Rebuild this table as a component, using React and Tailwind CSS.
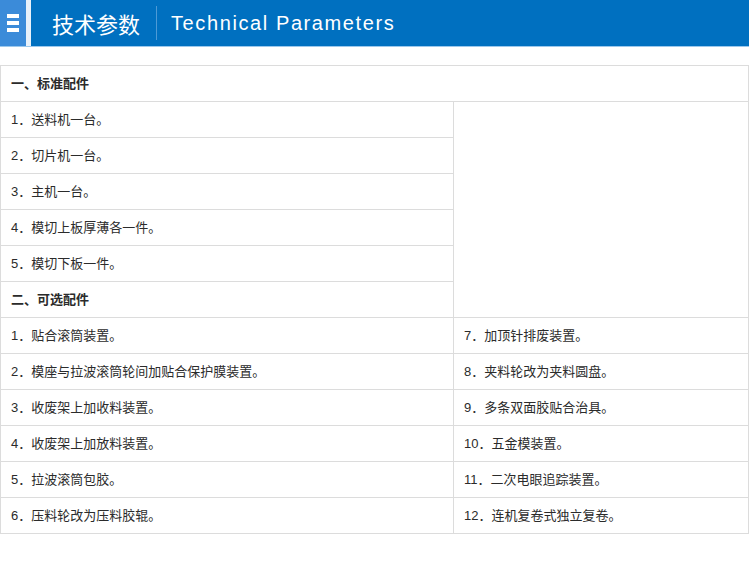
import React from "react";

const font = { fontFamily: '"Liberation Sans", Arial, "Noto Sans CJK SC", sans-serif' };

const std = ["1．送料机一台。", "2．切片机一台。", "3．主机一台。", "4．模切上板厚薄各一件。", "5．模切下板一件。"];
const opt = [
  ["1．贴合滚筒装置。", "7．加顶针排废装置。"],
  ["2．模座与拉波滚筒轮间加贴合保护膜装置。", "8．夹料轮改为夹料圆盘。"],
  ["3．收废架上加收料装置。", "9．多条双面胶贴合治具。"],
  ["4．收废架上加放料装置。", "10．五金模装置。"],
  ["5．拉波滚筒包胶。", "11．二次电眼追踪装置。"],
  ["6．压料轮改为压料胶辊。", "12．连机复卷式独立复卷。"],
];

const td = "h-[36px] border border-[#dcdcdc] px-[10px] py-0 text-[13px] text-[#2b2b2b] align-middle whitespace-nowrap";

export default function App() {
  return (
    <div className="w-[749px] h-[568px] bg-white overflow-hidden" style={font}>
      <div className="flex h-[47px] border-b border-[#9cc8ec]">
        <div className="w-[26px] bg-[#3b8bd9] flex items-center justify-center">
          <div className="flex flex-col gap-[3px]">
            <div className="w-[12px] h-[4px] bg-white" />
            <div className="w-[12px] h-[4px] bg-white" />
            <div className="w-[12px] h-[4px] bg-white" />
          </div>
        </div>
        <div className="w-[5px] bg-[#e8f1fa]" />
        <div className="flex-1 bg-[#0070c0] flex items-center">
          <span className="ml-[21px] text-white text-[22px] leading-none" style={{ fontFamily: '"Noto Sans CJK SC", sans-serif' }}>技术参数</span>
          <div className="ml-[16px] w-px h-[34px] bg-[#4d9ad6]" />
          <span className="ml-[14px] text-white text-[20px] tracking-[1.6px] leading-none">Technical Parameters</span>
        </div>
      </div>
      <div className="h-[18px]" />
      <table className="w-[749px] border-collapse table-fixed">
        <colgroup>
          <col className="w-[453px]" />
          <col />
        </colgroup>
        <tbody>
          <tr>
            <td colSpan={2} className={td + " font-bold"}>一、标准配件</td>
          </tr>
          {std.map((s, i) => (
            <tr key={s}>
              <td className={td}>{s}</td>
              {i === 0 && <td rowSpan={6} className="border border-[#dcdcdc]" />}
            </tr>
          ))}
          <tr>
            <td className={td + " font-bold"}>二、可选配件</td>
          </tr>
          {opt.map(([a, b]) => (
            <tr key={a}>
              <td className={td}>{a}</td>
              <td className={td}>{b}</td>
            </tr>
          ))}
        </tbody>
      </table>
    </div>
  );
}
